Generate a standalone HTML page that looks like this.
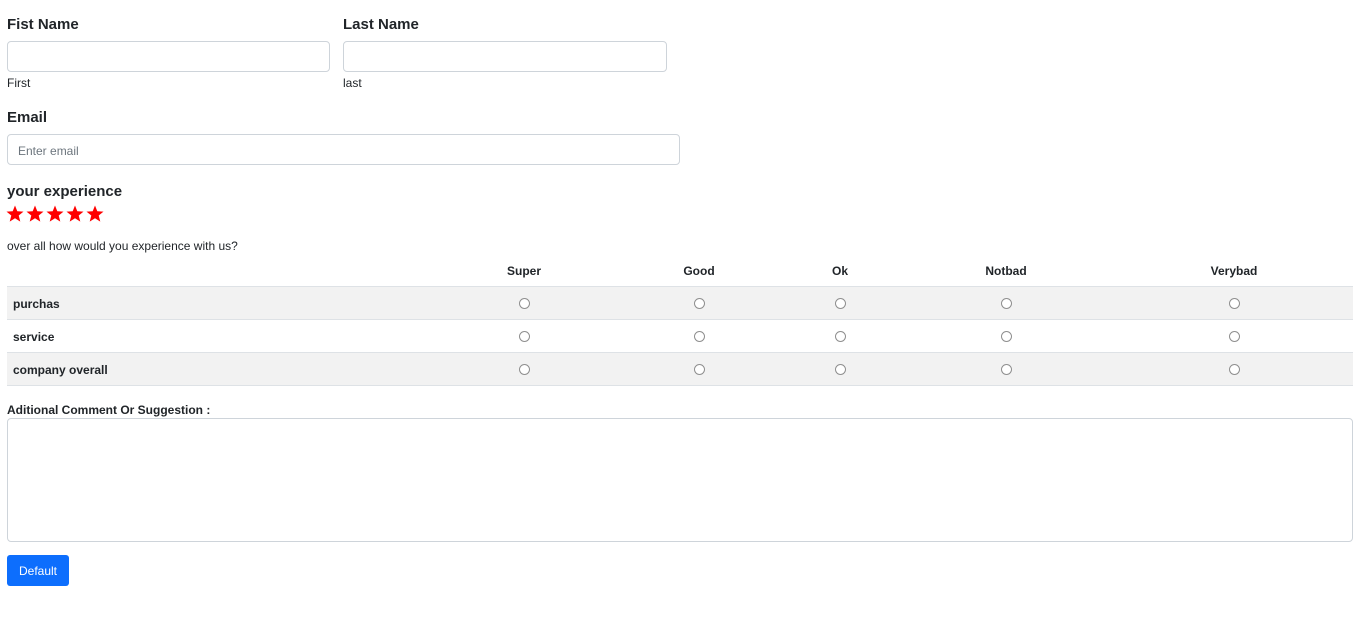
<!DOCTYPE html>
<html><head><style>
body{margin:0;background:#fff;font-family:"Liberation Sans",sans-serif;color:#212529;width:1364px;height:640px;position:relative;overflow:hidden}
.a{position:absolute}
.lbl{font-size:15px;font-weight:bold}
.inp{position:absolute;border:1px solid #ced4da;border-radius:4px;background:#fff;box-sizing:border-box}
.sm{font-size:12px}
.th{position:absolute;top:264px;font-size:12px;font-weight:bold;transform:translateX(-50%)}
.row{position:absolute;left:7px;width:1346px;height:33px;border-top:1px solid #dee2e6;box-sizing:border-box}
.rl{position:absolute;left:6px;top:10px;font-size:12px;font-weight:bold}
.r{position:absolute;top:11px;width:9px;height:9px;border:1px solid #8f8f8f;border-radius:50%;background:#fff;margin-left:-5px}
</style></head><body>
<div class="a lbl" style="left:7px;top:16px">Fist Name</div>
<div class="a lbl" style="left:343px;top:16px">Last Name</div>
<div class="inp" style="left:7px;top:41px;width:323px;height:31px"></div>
<div class="inp" style="left:343px;top:41px;width:324px;height:31px"></div>
<div class="a sm" style="left:7px;top:76px">First</div>
<div class="a sm" style="left:343px;top:76px">last</div>
<div class="a lbl" style="left:7px;top:109px">Email</div>
<div class="inp" style="left:7px;top:134px;width:673px;height:31px"><span class="a sm" style="left:10px;top:9px;color:#6c757d">Enter email</span></div>
<div class="a lbl" style="left:7px;top:183px">your experience</div>
<svg class="a" style="left:6px;top:205px" width="100" height="18" viewBox="0 0 100 18">
<defs><polygon id="s" points="9,0.5 11.3,6.2 17.5,6.6 12.7,10.5 14.3,16.6 9,13.2 3.7,16.6 5.3,10.5 0.5,6.6 6.7,6.2" fill="#f00"/></defs>
<use href="#s" x="0"/><use href="#s" x="20"/><use href="#s" x="40"/><use href="#s" x="60"/><use href="#s" x="80"/>
</svg>
<div class="a sm" style="left:7px;top:239px">over all how would you experience with us?</div>
<div class="th" style="left:524px">Super</div>
<div class="th" style="left:699px">Good</div>
<div class="th" style="left:840px">Ok</div>
<div class="th" style="left:1006px">Notbad</div>
<div class="th" style="left:1234px">Verybad</div>
<div class="row" style="top:286px;background:#f2f2f2"><span class="rl">purchas</span><i class="r" style="left:517px"></i><i class="r" style="left:692px"></i><i class="r" style="left:833px"></i><i class="r" style="left:999px"></i><i class="r" style="left:1227px"></i></div>
<div class="row" style="top:319px"><span class="rl">service</span><i class="r" style="left:517px"></i><i class="r" style="left:692px"></i><i class="r" style="left:833px"></i><i class="r" style="left:999px"></i><i class="r" style="left:1227px"></i></div>
<div class="row" style="top:352px;background:#f2f2f2;height:34px;border-bottom:1px solid #dee2e6"><span class="rl">company overall</span><i class="r" style="left:517px"></i><i class="r" style="left:692px"></i><i class="r" style="left:833px"></i><i class="r" style="left:999px"></i><i class="r" style="left:1227px"></i></div>
<div class="a" style="left:7px;top:403px;font-size:12px;font-weight:bold">Aditional Comment Or Suggestion :</div>
<div class="inp" style="left:7px;top:418px;width:1346px;height:124px"></div>
<div class="a" style="left:7px;top:555px;width:62px;height:31px;background:#0d6efd;border-radius:3px;color:#fff;font-size:12px;line-height:32px;text-align:center">Default</div>
</body></html>
